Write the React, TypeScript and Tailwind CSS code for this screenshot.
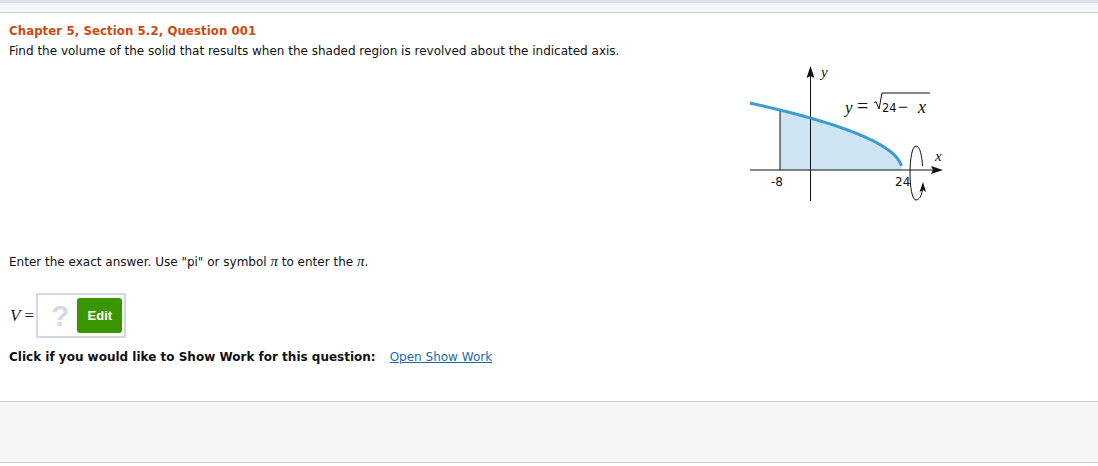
import React from "react";

function Figure() {
  // origin at (745,60)
  const ox = 745, oy = 60;
  const X = (u: number) => 780 + (u + 8) * 3.81 - ox;
  const Y = (v: number) => 169 - v * 10.6 - oy;
  const pts: string[] = [];
  for (let u = -15.9; u <= 24.0001; u += 0.25) {
    pts.push(`${X(u).toFixed(2)},${Y(Math.sqrt(Math.max(0, 24 - u))).toFixed(2)}`);
  }
  const shade: string[] = [];
  for (let u = -8; u <= 24.0001; u += 0.25) {
    shade.push(`${X(u).toFixed(2)},${Y(Math.sqrt(Math.max(0, 24 - u))).toFixed(2)}`);
  }
  const shadePath = `M${X(-8)},${Y(0)} L${shade.join(" L")} L${X(24)},${Y(0)} Z`;
  return (
    <svg width="205" height="145" viewBox="0 0 205 145" className="block">
      <path d={shadePath} fill="#cde5f2" />
      <line x1={X(-8)} y1={Y(Math.sqrt(32))} x2={X(-8)} y2={Y(0)} stroke="#111" strokeWidth="1" />
      {/* x axis */}
      <line x1="5" y1={Y(0)} x2="190" y2={Y(0)} stroke="#111" strokeWidth="1" />
      <polygon points={`198,${Y(0)} 186,${Y(0) - 4} 188,${Y(0)} 186,${Y(0) + 4}`} fill="#111" />
      {/* y axis */}
      <line x1="65.5" y1="14" x2="65.5" y2="140" stroke="#111" strokeWidth="1" />
      <polygon points="65.5,5 61.5,17 65.5,15 69.5,17" fill="#111" />
      {/* curve */}
      <polyline points={pts.join(" ")} fill="none" stroke="#3d9bd0" strokeWidth="3" />
      {/* revolve ellipse */}
      <path d="M171,85 C163,85 163,139 171,139" fill="none" stroke="#111" strokeWidth="1" />
      <path d="M171,85 C175,85 177,95 177.5,105" fill="none" stroke="#111" strokeWidth="1" />
      <path d="M171,139 C174,139 176.5,135 177.5,129" fill="none" stroke="#111" strokeWidth="1" />
      <polygon points="178,121 174.5,131 178,129 181,131" fill="#111" />
      <text x="76" y="16" fontFamily="'Liberation Serif', serif" fontStyle="italic" fontSize="15" fill="#111">y</text>
      <text x="190" y="100" fontFamily="'Liberation Serif', serif" fontStyle="italic" fontSize="15" fill="#111">x</text>
      <text x="26" y="125" fontFamily="'DejaVu Sans', sans-serif" fontSize="12" fill="#111">-8</text>
      <text x="150" y="125" fontFamily="'DejaVu Sans', sans-serif" fontSize="12" fill="#111">24</text>
      <text x="100" y="52" fontFamily="'Liberation Serif', serif" fontStyle="italic" fontSize="17" fill="#111">y</text>
      <text x="112" y="52" fontFamily="'Liberation Serif', serif" fontSize="20" fill="#111">=</text>
      <path d="M129,42 L131,40.5 L134,48 L137,32 L185,32" fill="none" stroke="#111" strokeWidth="1" />
      <text x="137" y="51" fontFamily="'DejaVu Sans', sans-serif" fontSize="11.5" fill="#111">24</text>
      <text x="153" y="52" fontFamily="'Liberation Serif', serif" fontSize="18" fill="#111">−</text>
      <text x="173" y="52" fontFamily="'Liberation Serif', serif" fontStyle="italic" fontSize="18" fill="#111">x</text>
    </svg>
  );
}

export default function App() {
  const f = { fontFamily: "'DejaVu Sans', Verdana, sans-serif" };
  const serif = { fontFamily: "'Liberation Serif', serif" };
  return (
    <div className="w-[1098px] h-[466px] bg-white overflow-hidden relative" style={f}>
      <div className="h-[3px] bg-[#dde2e8]" />
      <div className="h-[10px] bg-[#f4f7fa] border-b border-[#c9d2de]" />
      <div className="px-[9px] pt-[10px]">
        <div className="text-[13px] font-bold text-[#cc4a10] leading-[16px] tracking-[0.11px]" style={{ fontFamily: "'DejaVu Sans Condensed', 'DejaVu Sans', sans-serif" }}>
          Chapter 5, Section 5.2, Question 001
        </div>
        <div className="text-[12px] text-[#111] leading-[14px] mt-[5px]">
          Find the volume of the solid that results when the shaded region is revolved about the indicated axis.
        </div>
        <div className="ml-[736px] mt-[3px]">
          <Figure />
        </div>
        <div className="text-[12px] text-[#111] leading-[14px] mt-[48px]">
          Enter the exact answer. Use "pi" or symbol <span className="italic" style={{ ...serif, fontSize: 15 }}>π</span> to enter the <span className="italic" style={{ ...serif, fontSize: 15 }}>π</span>.
        </div>
        <div className="flex items-center mt-[24px]">
          <span className="italic text-[17px] text-[#222] ml-[1px]" style={serif}>V</span>
          <span className="text-[17px] text-[#222] ml-[4px]" style={serif}>=</span>
          <div className="ml-[2px] w-[90px] h-[45px] border-[2px] border-[#cfd8e3] flex items-center">
            <span className="text-[30px] font-bold text-[#d3dbe4] ml-[13px] leading-none" style={{ fontFamily: "'Liberation Sans', sans-serif" }}>?</span>
            <div className="ml-[8px] w-[45px] h-[35px] bg-[#3a9600] rounded-[3px] flex items-center justify-center text-white text-[13px] font-bold" style={{ fontFamily: "'Liberation Sans', sans-serif" }}>
              Edit
            </div>
          </div>
        </div>
        <div className="flex items-center mt-[12px] text-[12px] leading-[15px]">
          <span className="font-bold text-[#111]">Click if you would like to Show Work for this question:</span>
          <span className="ml-[14px] underline text-[#1c6aa5] font-normal">Open Show Work</span>
        </div>
      </div>
      <div className="absolute left-0 top-[401px] w-full h-[62px] bg-[#f4f7fa] border-y border-[#c9d2de]" />
    </div>
  );
}
